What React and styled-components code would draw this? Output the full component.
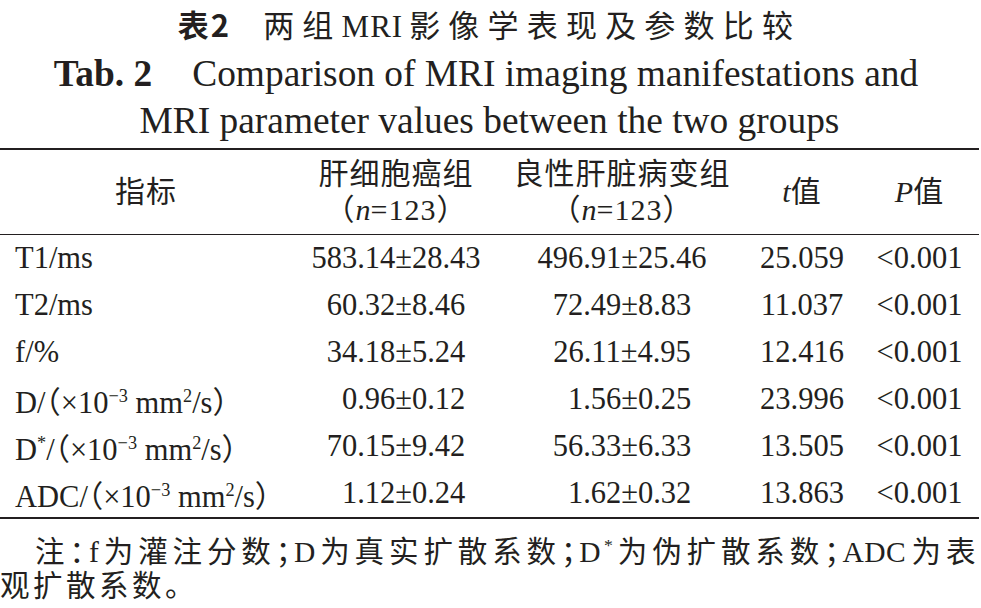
import React from "react";
import styled, { createGlobalStyle } from "styled-components";

const Global = createGlobalStyle`
  html, body { margin: 0; padding: 0; background: #ffffff; }
  body { width: 981px; }
`;

const INK = "#231f20";
const SERIF = `"Liberation Serif", "Noto Sans CJK SC", serif`;

const Page = styled.div`
  width: 979px;
  color: ${INK};
  font-family: ${SERIF};
`;

const TitleBlock = styled.header`
  text-align: center;
  margin-bottom: 4px;
`;

const TitleCn = styled.div`
  font-size: 31px;
  line-height: 47px;
  letter-spacing: 8.2px;
  white-space: nowrap;
`;

const Latin = styled.span`
  letter-spacing: ${(p) => (p.$tight ? "0.5px" : "1px")};
  margin-right: ${(p) => (p.$tight ? "4px" : "6px")};
`;

const TableNo = styled.span`
  font-family: "Noto Sans CJK SC", sans-serif;
  font-weight: 700;
  letter-spacing: 2px;
  margin-right: 32px;
`;

const TitleEn = styled.div`
  font-size: 37.4px;
  line-height: 47px;
  white-space: nowrap;
  padding-right: ${(p) => p.$shift || 0}px;
`;

const TabLabel = styled.span`
  font-weight: 700;
  margin-right: 40px;
`;

const Grid = styled.div`
  display: grid;
  grid-template-columns: 292px 208px 244px 116px 119px;
  border-top: 2px solid ${INK};
  border-bottom: 2px solid ${INK};
`;

const HeadCell = styled.div`
  box-sizing: border-box;
  height: 85px;
  border-bottom: 1px solid ${INK};
  display: flex;
  flex-direction: column;
  align-items: center;
  justify-content: center;
  font-size: 30px;
  line-height: 36px;
  letter-spacing: 1px;
  white-space: nowrap;
`;

const Cell = styled.div`
  box-sizing: border-box;
  height: 47px;
  display: flex;
  align-items: center;
  justify-content: ${(p) => (p.$left ? "flex-start" : "center")};
  padding-left: ${(p) => (p.$left ? "15px" : "0")};
  font-size: 30.5px;
  white-space: nowrap;
`;

const It = styled.i`
  font-style: italic;
  letter-spacing: 0;
`;

const Sup = styled.sup`
  font-size: 0.6em;
  line-height: 0;
  vertical-align: 0.62em;
`;

const Half = styled.span`
  font-feature-settings: "halt";
`;

const Ghost = styled.span`
  visibility: hidden;
`;

const Note = styled.div`
  padding-top: 16px;
  font-size: 29.5px;
  line-height: 34px;
  letter-spacing: 3.5px;
`;

const NoteFirst = styled.div`
  text-indent: 35px;
  text-align: justify;
  text-align-last: justify;
  white-space: nowrap;
`;

const NoteLine = styled.div``;

const Unit = () => (
  <>
    /<Half>（</Half>×10<Sup>−3</Sup> mm<Sup>2</Sup>/s）
  </>
);

const rows = [
  { label: "T1/ms", a: "583.14±28.43", b: "496.91±25.46", t: "25.059", p: "<0.001" },
  { label: "T2/ms", a: "60.32±8.46", b: "72.49±8.83", t: "11.037", p: "<0.001" },
  { label: "f/%", a: "34.18±5.24", b: "26.11±4.95", t: "12.416", p: "<0.001" },
  { label: <>D<Unit /></>, a: "0.96±0.12", b: "1.56±0.25", t: "23.996", p: "<0.001", pad: true },
  { label: <>D<Sup>*</Sup><Unit /></>, a: "70.15±9.42", b: "56.33±6.33", t: "13.505", p: "<0.001" },
  { label: <>ADC<Unit /></>, a: "1.12±0.24", b: "1.62±0.32", t: "13.863", p: "<0.001", pad: true },
];

export default function App() {
  return (
    <Page>
      <Global />
      <TitleBlock>
        <TitleCn>
          <TableNo>表2</TableNo>两组<Latin>MRI</Latin>影像学表现及参数比较
        </TitleCn>
        <TitleEn $shift={7}>
          <TabLabel>Tab. 2</TabLabel>Comparison of MRI imaging manifestations and
        </TitleEn>
        <TitleEn>MRI parameter values between the two groups</TitleEn>
      </TitleBlock>

      <Grid>
        <HeadCell>指标</HeadCell>
        <HeadCell>
          <span>肝细胞癌组</span>
          <span>
            （<It>n</It>=123）
          </span>
        </HeadCell>
        <HeadCell>
          <span>良性肝脏病变组</span>
          <span>
            （<It>n</It>=123）
          </span>
        </HeadCell>
        <HeadCell>
          <span>
            <It>t</It>值
          </span>
        </HeadCell>
        <HeadCell>
          <span>
            <It>P</It>值
          </span>
        </HeadCell>

        {rows.map((r, i) => (
          <React.Fragment key={i}>
            <Cell $left>
              <span>{r.label}</span>
            </Cell>
            <Cell>
              <span>
                {r.pad && <Ghost>0</Ghost>}
                {r.a}
              </span>
            </Cell>
            <Cell>
              <span>
                {r.pad && <Ghost>0</Ghost>}
                {r.b}
              </span>
            </Cell>
            <Cell>
              <span>{r.t}</span>
            </Cell>
            <Cell>
              <span>{r.p}</span>
            </Cell>
          </React.Fragment>
        ))}
      </Grid>

      <Note>
        <NoteFirst>
          注<Half>：</Half>f为灌注分数<Half>；</Half>D为真实扩散系数<Half>；</Half>D<Sup>*</Sup>为伪扩散系数<Half>；</Half><Latin $tight>ADC</Latin>为表
        </NoteFirst>
        <NoteLine>观扩散系数。</NoteLine>
      </Note>
    </Page>
  );
}
